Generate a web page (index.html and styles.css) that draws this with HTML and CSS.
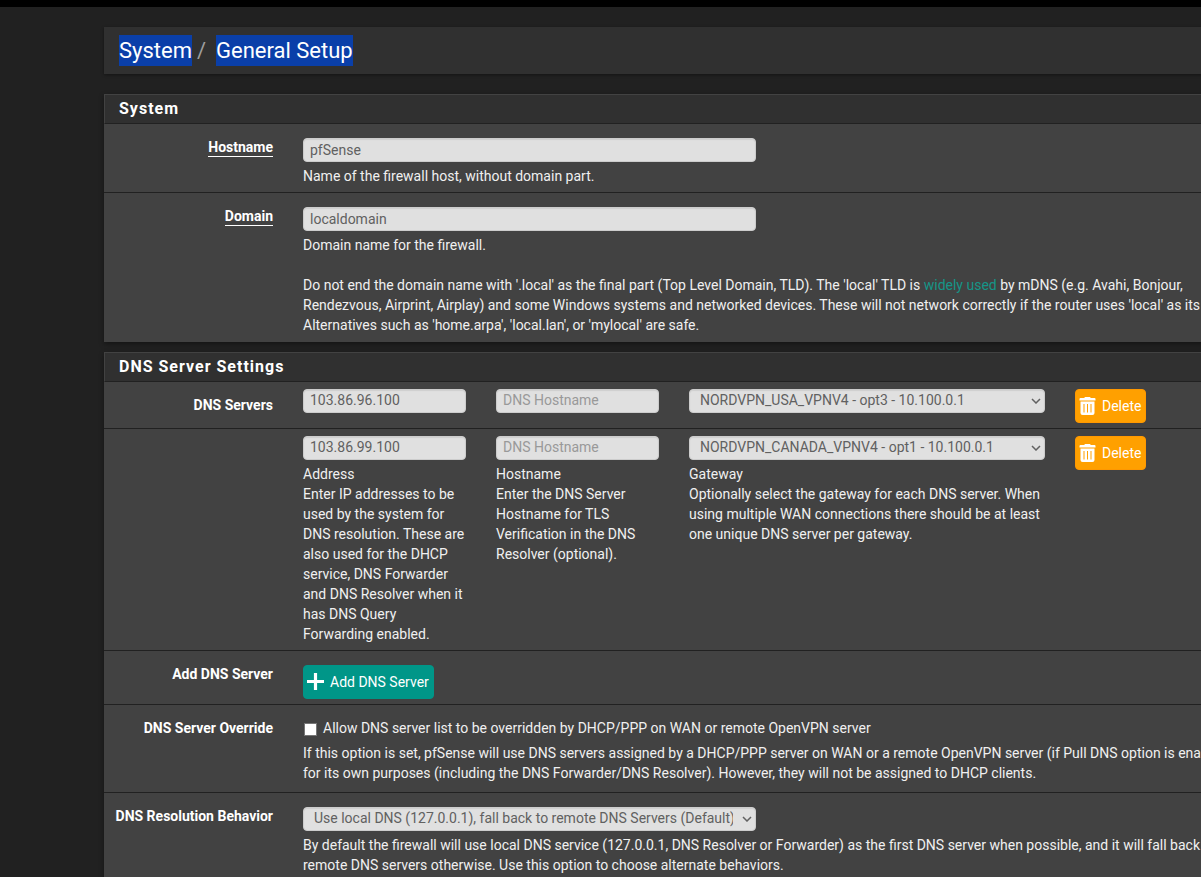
FILE: index.html
```html
<!DOCTYPE html>
<html lang="en">
<head>
<meta charset="utf-8">
<title>System / General Setup</title>
<link rel="stylesheet" href="styles.css">
</head>
<body>
<svg class="symbols" aria-hidden="true">
  <symbol id="icon-trash" viewBox="0 0 16 18">
    <path fill="currentColor" fill-rule="evenodd" d="M5.500 0h5l.8 1H15a1 1 0 0 1 1 1v1.500H0V2a1 1 0 0 1 1-1h3.700zM1 4.500h14V16a2 2 0 0 1-2 2H3a2 2 0 0 1-2-2zM4 7v8.500h1V7zm3.500 0v8.500h1V7zM11 7v8.500h1V7z"/>
  </symbol>
  <symbol id="icon-plus" viewBox="0 0 16 16">
    <path fill="currentColor" d="M6.500 0h3v6.500H16v3H9.500V16h-3V9.500H0v-3h6.500z"/>
  </symbol>
</svg>
<div class="page">
  <div class="topbar"></div>
  <main class="content">
    <header class="breadcrumb">
      <h1 class="trail"><span class="selected">System</span><span class="slash">/</span><span class="selected">General Setup</span></h1>
    </header>

    <section class="panel">
      <h2 class="panel-title">System</h2>
      <div class="row">
        <label class="row-label required" for="hostname"><span>Hostname</span></label>
        <div class="row-body">
          <input class="control half" id="hostname" type="text" value="pfSense">
          <p class="help">Name of the firewall host, without domain part.</p>
        </div>
      </div>
      <div class="row">
        <label class="row-label required" for="domain"><span>Domain</span></label>
        <div class="row-body">
          <input class="control half" id="domain" type="text" value="localdomain">
          <p class="help">Domain name for the firewall.<br><br>Do not end the domain name with '.local' as the final part (Top Level Domain, TLD). The 'local' TLD is <a href="#">widely used</a> by mDNS (e.g. Avahi, Bonjour,<br>Rendezvous, Airprint, Airplay) and some Windows systems and networked devices. These will not network correctly if the router uses 'local' as its<br>Alternatives such as 'home.arpa', 'local.lan', or 'mylocal' are safe.</p>
        </div>
      </div>
    </section>

    <section class="panel">
      <h2 class="panel-title">DNS Server Settings</h2>
      <div class="row compact">
        <label class="row-label" for="dns1">DNS Servers</label>
        <div class="row-body servers">
          <div><input class="control" id="dns1" type="text" value="103.86.96.100"></div>
          <div><input class="control" type="text" placeholder="DNS Hostname" aria-label="DNS Hostname"></div>
          <div class="wide"><select class="control" aria-label="Gateway"><option>NORDVPN_USA_VPNV4 - opt3 - 10.100.0.1</option></select></div>
          <div><button class="btn delete" type="button"><svg class="icon-trash"><use href="#icon-trash"/></svg>Delete</button></div>
        </div>
      </div>
      <div class="row compact">
        <span class="row-label"></span>
        <div class="row-body servers">
          <div>
            <input class="control" id="dns2" type="text" value="103.86.99.100">
            <p class="help"><label for="dns2">Address</label><br>Enter IP addresses to be used by the system for DNS resolution. These are also used for the DHCP service, DNS Forwarder and DNS Resolver when it has DNS Query Forwarding enabled.</p>
          </div>
          <div>
            <input class="control" id="host2" type="text" placeholder="DNS Hostname">
            <p class="help"><label for="host2">Hostname</label><br>Enter the DNS Server Hostname for TLS Verification in the DNS Resolver (optional).</p>
          </div>
          <div class="wide">
            <select class="control" id="gateway2"><option>NORDVPN_CANADA_VPNV4 - opt1 - 10.100.0.1</option></select>
            <p class="help"><label for="gateway2">Gateway</label><br>Optionally select the gateway for each DNS server. When using multiple WAN connections there should be at least one unique DNS server per gateway.</p>
          </div>
          <div><button class="btn delete" type="button"><svg class="icon-trash"><use href="#icon-trash"/></svg>Delete</button></div>
        </div>
      </div>
      <div class="row">
        <label class="row-label" for="add">Add DNS Server</label>
        <div class="row-body">
          <button class="btn add" id="add" type="button"><svg class="icon-plus"><use href="#icon-plus"/></svg>Add DNS Server</button>
        </div>
      </div>
      <div class="row check-row">
        <span class="row-label">DNS Server Override</span>
        <div class="row-body">
          <label class="check"><input type="checkbox">Allow DNS server list to be overridden by DHCP/PPP on WAN or remote OpenVPN server</label>
          <p class="help">If this option is set, pfSense will use DNS servers assigned by a DHCP/PPP server on WAN or a remote OpenVPN server (if Pull DNS option is enabled)<br>for its own purposes (including the DNS Forwarder/DNS Resolver). However, they will not be assigned to DHCP clients.</p>
        </div>
      </div>
      <div class="row">
        <label class="row-label" for="resolution">DNS Resolution Behavior</label>
        <div class="row-body">
          <select class="control half" id="resolution"><option>Use local DNS (127.0.0.1), fall back to remote DNS Servers (Default)</option></select>
          <p class="help">By default the firewall will use local DNS service (127.0.0.1, DNS Resolver or Forwarder) as the first DNS server when possible, and it will fall back<br>remote DNS servers otherwise. Use this option to choose alternate behaviors.</p>
        </div>
      </div>
    </section>
  </main>
</div>
</body>
</html>
```

FILE: styles.css
```css
* {
  box-sizing: border-box;
}

body {
  margin: 0;
  background: #212121;
  color: #f0f0f0;
  font: 14px/20px Roboto, "Liberation Sans", sans-serif;
}

h1,
h2,
p {
  margin: 0;
}

.symbols {
  display: none;
}

.page {
  height: 100vh;
  overflow: hidden;
}

.topbar {
  height: 7px;
  background: #000;
}

/* The panels run past the right edge of the window. */
.content {
  margin: 20px -52px 0 104px;
}

.breadcrumb {
  margin-bottom: 20px;
  padding: 8px 15px;
  background: #303030;
  box-shadow: 0 1px 3px rgba(0, 0, 0, 0.4);
}

.trail {
  display: flex;
  font-size: 22px;
  font-weight: 400;
  line-height: 31px;
}

.selected {
  background: #0a3fa9;
  color: #fff;
}

.slash {
  width: 24px;
  padding-left: 5px;
  color: #9e9e9e;
}

.panel {
  margin-bottom: 10px;
  background: #424242;
  box-shadow: 0 2px 5px rgba(0, 0, 0, 0.4);
}

.panel-title {
  padding: 4px 14px;
  border: 1px solid #424242;
  border-bottom-color: #212121;
  background: #303030;
  color: #fff;
  font-size: 16px;
  font-weight: 700;
  letter-spacing: 1px;
}

.row {
  display: grid;
  grid-template-columns: 184px 1fr;
  border-bottom: 1px solid #212121;
}

.row:last-child {
  border-bottom-color: transparent;
}

.row-label {
  padding: 13px 15px 0 0;
  color: #fff;
  font-weight: 700;
  text-align: right;
  white-space: nowrap;
}

.required span {
  display: inline-block;
  border-bottom: 1px solid #fff;
  line-height: 17px;
}

.row-body {
  padding: 14px 15px 5px;
}

.compact .row-body {
  padding: 7px 0 5px;
}

.servers {
  display: grid;
  grid-template-columns: repeat(5, 1fr);
}

.servers > div {
  padding: 0 15px;
}

.servers .wide {
  grid-column: span 2;
}

.control {
  display: block;
  width: 100%;
  height: 24px;
  padding: 0 6px;
  border: 1px solid #ccc;
  border-radius: 4px;
  background: #e0e0e0;
  box-shadow: inset 0 1px 1px rgba(0, 0, 0, 0.08);
  color: #616161;
  font: inherit;
}

select.control {
  appearance: none;
  padding: 0 22px 2px 10px;
  background: #e0e0e0 url("data:image/svg+xml,%3Csvg xmlns='http://www.w3.org/2000/svg' width='10' height='6'%3E%3Cpath d='M1 1l4 4 4-4' fill='none' stroke='%23616161' stroke-width='1.5'/%3E%3C/svg%3E") no-repeat right 3px center;
}

.compact input.control {
  padding-bottom: 2px;
}

.control::placeholder {
  color: #999;
}

.half {
  width: calc(50% - 15px);
}

.help {
  margin-top: 4px;
  padding-bottom: 1px;
}

.row > .row-body > .help {
  white-space: nowrap;
}

.help a {
  color: #159588;
  text-decoration: none;
}

.btn {
  display: inline-flex;
  align-items: center;
  height: 34px;
  padding: 0 4px 1px 3px;
  border: 1px solid;
  border-radius: 4px;
  color: #fff;
  font: inherit;
  white-space: nowrap;
  vertical-align: top;
  gap: 6px;
}

.delete {
  border-color: #ff9800;
  background: #ffa000;
}

.add {
  border-color: #009688;
  background: #009688;
}

.icon-trash {
  width: 17px;
  height: 18px;
}

.icon-plus {
  width: 17px;
  height: 17px;
}

.check-row .row-body {
  padding: 13px 15px 8px;
}

.check {
  display: flex;
  align-items: center;
  gap: 6px;
}

.check input {
  appearance: none;
  width: 13px;
  height: 13px;
  margin: 2px 0 0 1px;
  border: 1px solid #767676;
  background: #fff;
}

.check-row .help {
  margin-top: 5px;
}
```
